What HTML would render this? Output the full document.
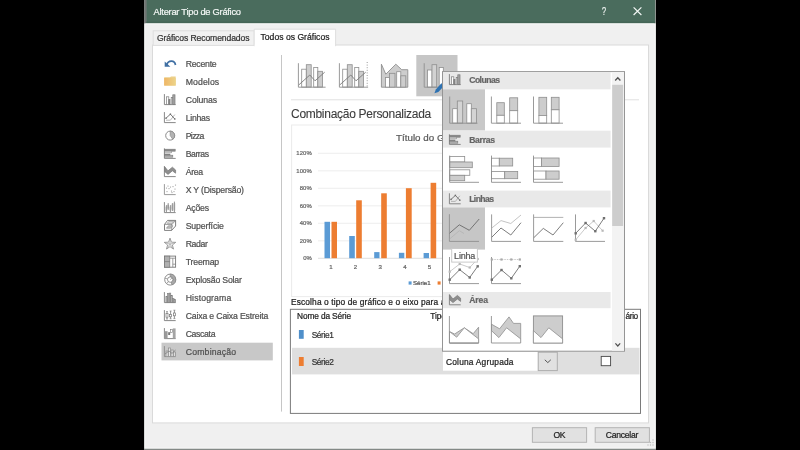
<!DOCTYPE html>
<html><head><meta charset="utf-8"><title>Alterar Tipo de Gráfico</title>
<style>
*{box-sizing:border-box;margin:0;padding:0}
html,body{width:800px;height:450px;overflow:hidden;background:#000;font-family:"Liberation Sans",sans-serif;}
#root{position:absolute;left:0;top:0;width:800px;height:450px;overflow:hidden;background:#000;filter:blur(0.42px)}
svg{position:absolute;left:0;top:0}
.t{position:absolute;white-space:pre;line-height:1.15;font-family:"Liberation Sans",sans-serif;-webkit-text-stroke:0.22px currentColor;}
.L{position:absolute;left:0;top:0;width:800px;height:450px}
</style></head><body>
<div id="root">
<div class="L" style="z-index:1"><svg width="800" height="450" viewBox="0 0 800 450">
<rect x="144.00" y="0.00" width="512.00" height="450.00" fill="#838986" />
<rect x="144.30" y="0.00" width="511.50" height="448.70" fill="#fbfbfb" />
<rect x="145.30" y="0.00" width="509.50" height="447.80" fill="#f0f0f0" />
<rect x="144.30" y="0.00" width="511.50" height="23.30" fill="#78807c" />
<rect x="146.40" y="0.00" width="508.50" height="23.30" fill="#4a6c5d" />
<rect x="144.30" y="0.00" width="2.10" height="23.30" fill="#6f7472" />
<rect x="146.40" y="21.60" width="508.50" height="1.70" fill="#446556" />
<rect x="145.30" y="23.30" width="509.50" height="1.00" fill="#f9fbfa" />
<path d="M633.6 7.3 L641.4 15.0 M641.4 7.3 L633.6 15.0" stroke="#f4f8f6" stroke-width="1.15" fill="none"/>
<rect x="152.50" y="45.00" width="496.00" height="377.90" fill="#fff" stroke="#dadada" stroke-width="1" />
<rect x="153.20" y="30.80" width="101.00" height="14.60" fill="#f1f1f1" stroke="#dedede" stroke-width="1" />
<path d="M254.2 46.2 V29.2 H335.6 V46.2" fill="#fff" stroke="#dedede" stroke-width="1"/>
<rect x="254.80" y="44.40" width="80.20" height="2.20" fill="#fff" />
<line x1="281.50" y1="55.00" x2="281.50" y2="411.60" stroke="#c6c6c6" stroke-width="1" />
<rect x="161.50" y="342.70" width="111.30" height="17.70" fill="#c8c8c8" />
<line x1="291.00" y1="99.80" x2="639.00" y2="99.80" stroke="#e0e0e0" stroke-width="1" />
<rect x="416.30" y="55.00" width="41.20" height="41.30" fill="#c6c6c6" />
<rect x="301.70" y="69.20" width="4.60" height="17.90" fill="#fff" stroke="#8e8e8e" stroke-width="0.8" /><rect x="306.30" y="64.70" width="4.90" height="22.40" fill="#cdcdcd" stroke="#8e8e8e" stroke-width="0.8" /><rect x="313.70" y="67.50" width="4.10" height="19.60" fill="#fff" stroke="#8e8e8e" stroke-width="0.8" /><rect x="317.80" y="71.30" width="4.70" height="15.80" fill="#cdcdcd" stroke="#8e8e8e" stroke-width="0.8" />
<path d="M298.40 63.20 L298.40 87.20 L325.60 87.20" fill="none" stroke="#8e8e8e" stroke-width="0.9" stroke-linejoin="round" />
<path d="M298.70 85.00 L309.80 75.00 L315.00 80.80 L324.70 72.20" fill="none" stroke="#7a7a7a" stroke-width="0.9" stroke-linejoin="round" />
<rect x="342.70" y="69.20" width="4.60" height="17.90" fill="#fff" stroke="#8e8e8e" stroke-width="0.8" /><rect x="347.30" y="64.70" width="4.90" height="22.40" fill="#cdcdcd" stroke="#8e8e8e" stroke-width="0.8" /><rect x="354.70" y="67.50" width="4.10" height="19.60" fill="#fff" stroke="#8e8e8e" stroke-width="0.8" /><rect x="358.80" y="71.30" width="4.70" height="15.80" fill="#cdcdcd" stroke="#8e8e8e" stroke-width="0.8" />
<path d="M339.40 63.20 L339.40 87.20 L368.10 87.20" fill="none" stroke="#8e8e8e" stroke-width="0.9" stroke-linejoin="round" />
<path d="M339.70 85.00 L350.80 75.00 L356.00 80.80 L365.70 72.20" fill="none" stroke="#7a7a7a" stroke-width="0.9" stroke-linejoin="round" />
<line x1="367.20" y1="62.00" x2="367.20" y2="87.00" stroke="#9a9a9a" stroke-width="1" stroke-dasharray="1 1.6"/>
<path d="M381.40 64.20 L385.80 74.20 L395.80 64.20 L401.70 69.70 L407.80 69.70 L407.80 87.20 L381.40 87.20 Z" fill="#cdcdcd" stroke="#8e8e8e" stroke-width="0.9" stroke-linejoin="round" />
<rect x="385.50" y="77.50" width="4.00" height="9.60" fill="#fff" stroke="#8e8e8e" stroke-width="0.8" /><rect x="389.50" y="73.30" width="5.50" height="13.80" fill="#cdcdcd" stroke="#8e8e8e" stroke-width="0.8" /><rect x="396.70" y="71.70" width="4.10" height="15.40" fill="#fff" stroke="#8e8e8e" stroke-width="0.8" /><rect x="400.80" y="75.80" width="5.00" height="11.30" fill="#cdcdcd" stroke="#8e8e8e" stroke-width="0.8" />
<rect x="427.50" y="70.00" width="4.50" height="17.10" fill="#fff" stroke="#8e8e8e" stroke-width="0.8" /><rect x="432.00" y="64.70" width="4.70" height="22.40" fill="#d2d2d2" stroke="#8e8e8e" stroke-width="0.8" /><rect x="439.20" y="67.50" width="4.10" height="19.60" fill="#fff" stroke="#8e8e8e" stroke-width="0.8" /><rect x="443.30" y="71.50" width="4.70" height="15.60" fill="#d2d2d2" stroke="#8e8e8e" stroke-width="0.8" />
<path d="M424.20 63.20 L424.20 87.20 L451.00 87.20" fill="none" stroke="#8e8e8e" stroke-width="0.9" stroke-linejoin="round" />
<path d="M434.4 93.2 L435.8 89.4 L441.4 83.2 L444.2 85.8 L438.4 92.0 Z" fill="#2e72b2"/>
<rect x="291.60" y="125.00" width="328.40" height="171.60" fill="#fff" stroke="#ebebeb" stroke-width="1" />
<line x1="318.00" y1="153.30" x2="612.00" y2="153.30" stroke="#e9e9e9" stroke-width="0.8" />
<line x1="318.00" y1="170.80" x2="612.00" y2="170.80" stroke="#e9e9e9" stroke-width="0.8" />
<line x1="318.00" y1="188.30" x2="612.00" y2="188.30" stroke="#e9e9e9" stroke-width="0.8" />
<line x1="318.00" y1="205.80" x2="612.00" y2="205.80" stroke="#e9e9e9" stroke-width="0.8" />
<line x1="318.00" y1="223.30" x2="612.00" y2="223.30" stroke="#e9e9e9" stroke-width="0.8" />
<line x1="318.00" y1="240.80" x2="612.00" y2="240.80" stroke="#e9e9e9" stroke-width="0.8" />
<line x1="318.00" y1="258.30" x2="612.00" y2="258.30" stroke="#d6d6d6" stroke-width="0.8" />
<rect x="324.50" y="221.80" width="5.50" height="36.40" fill="#5b9bd5" />
<rect x="331.50" y="221.80" width="5.50" height="36.40" fill="#ed7d31" />
<rect x="349.20" y="236.00" width="5.60" height="22.20" fill="#5b9bd5" />
<rect x="356.20" y="200.30" width="5.60" height="57.90" fill="#ed7d31" />
<rect x="374.20" y="252.10" width="5.30" height="6.10" fill="#5b9bd5" />
<rect x="381.20" y="193.30" width="5.60" height="64.90" fill="#ed7d31" />
<rect x="398.90" y="252.80" width="5.40" height="5.40" fill="#5b9bd5" />
<rect x="405.90" y="188.20" width="5.80" height="70.00" fill="#ed7d31" />
<rect x="423.60" y="253.00" width="5.40" height="5.20" fill="#5b9bd5" />
<rect x="430.60" y="182.80" width="5.60" height="75.40" fill="#ed7d31" />
<rect x="408.60" y="281.40" width="3.00" height="3.20" fill="#5b9bd5" />
<rect x="437.60" y="281.40" width="3.00" height="3.20" fill="#ed7d31" />
<rect x="290.40" y="309.30" width="350.10" height="104.10" fill="#fff" stroke="#7a7a7a" stroke-width="1" />
<rect x="292.00" y="347.80" width="347.50" height="26.60" fill="#dfdfdf" />
<rect x="298.90" y="330.00" width="4.80" height="8.80" fill="#4f8fca" />
<rect x="298.90" y="357.00" width="4.80" height="9.00" fill="#ed7d31" />
<rect x="443.00" y="352.00" width="95.00" height="18.70" fill="#fff" />
<rect x="538.20" y="352.20" width="19.10" height="18.40" fill="#e1e1e1" stroke="#adadad" stroke-width="1" />
<path d="M544.8 359.8 L547.8 362.6 L550.8 359.8" fill="none" stroke="#444" stroke-width="0.9"/>
<rect x="601.20" y="356.40" width="9.40" height="9.30" fill="#fff" stroke="#484848" stroke-width="0.9" />
<rect x="532.40" y="427.70" width="54.20" height="14.60" fill="#e1e1e1" stroke="#b4b4b4" stroke-width="1" />
<rect x="595.20" y="427.70" width="54.20" height="14.60" fill="#e1e1e1" stroke="#b4b4b4" stroke-width="1" />
<rect x="652.40" y="444.40" width="1.20" height="1.20" fill="#bdbdbd" />
<rect x="652.40" y="441.90" width="1.20" height="1.20" fill="#bdbdbd" />
<rect x="649.90" y="444.40" width="1.20" height="1.20" fill="#bdbdbd" />
<rect x="652.40" y="439.40" width="1.20" height="1.20" fill="#bdbdbd" />
<rect x="649.90" y="441.90" width="1.20" height="1.20" fill="#bdbdbd" />
<rect x="647.40" y="444.40" width="1.20" height="1.20" fill="#bdbdbd" />
<path d="M166.6 65.0 C168.2 60.2 174.6 59.6 175.5 65.0" fill="none" stroke="#3f6fa3" stroke-width="1.7"/><path d="M164.7 61.6 V66.8 H170.4 Z" fill="#3f6fa3"/>
<defs><linearGradient id="fg" x1="0" x2="1" y1="0" y2="0"><stop offset="0" stop-color="#efb666"/><stop offset="1" stop-color="#ecd48a"/></linearGradient></defs><path d="M164.2 77.3 H170 L171 76.4 H175.7 V85.6 H164.2 Z" fill="#ecd08a"/><path d="M164.2 78 H175.7 V85.6 H164.2 Z" fill="url(#fg)"/>
<path d="M164.40 94.10 L164.40 104.60 L175.70 104.60" fill="none" stroke="#7a7a7a" stroke-width="0.9" stroke-linejoin="round" /><rect x="166.40" y="96.80" width="2.40" height="7.80" fill="#fff" stroke="#7a7a7a" stroke-width="0.7" /><rect x="168.80" y="99.60" width="1.20" height="5.00" fill="#8c8c8c" stroke="#7a7a7a" stroke-width="0.7" /><rect x="171.20" y="97.60" width="1.60" height="7.00" fill="#fff" stroke="#7a7a7a" stroke-width="0.7" /><rect x="172.80" y="94.80" width="2.20" height="9.80" fill="#a4a4a4" stroke="#7a7a7a" stroke-width="0.7" />
<path d="M164.40 112.10 L164.40 122.60 L175.70 122.60" fill="none" stroke="#7a7a7a" stroke-width="0.9" stroke-linejoin="round" /><path d="M166.00 120.20 L170.40 120.20 L174.80 114.60" fill="none" stroke="#a6a6a6" stroke-width="0.8" stroke-linejoin="round" /><path d="M166.00 118.20 L170.40 114.20 L174.80 119.00" fill="none" stroke="#6a6a6a" stroke-width="0.9" stroke-linejoin="round" /><rect x="165.30" y="117.50" width="1.40" height="1.40" fill="#6a6a6a" /><rect x="169.70" y="113.50" width="1.40" height="1.40" fill="#6a6a6a" /><rect x="174.10" y="118.30" width="1.40" height="1.40" fill="#6a6a6a" />
<circle cx="170.2" cy="135.6" r="4.5" fill="#fff" stroke="#8a8a8a" stroke-width="1"/><path d="M170.2 135.6 V131.1 A4.5 4.5 0 0 1 172.8 139.29999999999998 Z" fill="#b4b4b4" stroke="#8a8a8a" stroke-width="0.7"/>
<path d="M164.40 148.40 L164.40 158.40 L175.70 158.40" fill="none" stroke="#7a7a7a" stroke-width="0.9" stroke-linejoin="round" /><rect x="164.40" y="149.20" width="10.80" height="2.00" fill="#8a8a8a" stroke="#7a7a7a" stroke-width="0.6" /><rect x="164.40" y="151.20" width="7.20" height="1.60" fill="#fff" stroke="#7a7a7a" stroke-width="0.6" /><rect x="164.40" y="154.00" width="5.60" height="1.20" fill="#8a8a8a" stroke="#7a7a7a" stroke-width="0.6" /><rect x="164.40" y="155.20" width="8.40" height="2.00" fill="#b0b0b0" stroke="#7a7a7a" stroke-width="0.6" />
<path d="M164.40 166.10 L164.40 176.60 L175.70 176.60" fill="none" stroke="#7a7a7a" stroke-width="0.9" stroke-linejoin="round" /><path d="M164.70 166.80 L168.00 170.80 L172.40 167.20 L175.60 170.00 L175.60 173.20 L172.40 170.80 L168.00 174.40 L164.70 171.60 Z" fill="#8e8e8e" stroke="#777" stroke-width="0.7" stroke-linejoin="round" />
<path d="M164.40 184.10 L164.40 194.60 L175.70 194.60" fill="none" stroke="#8e8e8e" stroke-width="0.9" stroke-linejoin="round" />
<rect x="166.45" y="191.05" width="1.10" height="1.10" fill="#a8a8a8" />
<rect x="168.45" y="188.05" width="1.10" height="1.10" fill="#a8a8a8" />
<rect x="170.95" y="190.55" width="1.10" height="1.10" fill="#a8a8a8" />
<rect x="172.45" y="186.05" width="1.10" height="1.10" fill="#a8a8a8" />
<rect x="174.45" y="188.55" width="1.10" height="1.10" fill="#a8a8a8" />
<rect x="167.45" y="185.55" width="1.10" height="1.10" fill="#a8a8a8" />
<rect x="171.45" y="192.05" width="1.10" height="1.10" fill="#a8a8a8" />
<rect x="174.95" y="184.55" width="1.10" height="1.10" fill="#a8a8a8" />
<rect x="165.95" y="187.55" width="1.10" height="1.10" fill="#a8a8a8" />
<rect x="169.95" y="186.55" width="1.10" height="1.10" fill="#a8a8a8" />
<rect x="173.45" y="191.05" width="1.10" height="1.10" fill="#a8a8a8" />
<path d="M164.40 202.10 L164.40 212.60 L175.70 212.60" fill="none" stroke="#7a7a7a" stroke-width="0.9" stroke-linejoin="round" />
<line x1="166.40" y1="205.10" x2="166.40" y2="212.00" stroke="#7a7a7a" stroke-width="0.8" />
<rect x="165.65" y="206.70" width="1.50" height="3.90" fill="#9a9a9a" />
<line x1="168.20" y1="203.10" x2="168.20" y2="210.10" stroke="#7a7a7a" stroke-width="0.8" />
<rect x="167.45" y="204.70" width="1.50" height="4.00" fill="#9a9a9a" />
<line x1="170.40" y1="205.10" x2="170.40" y2="212.00" stroke="#7a7a7a" stroke-width="0.8" />
<rect x="169.65" y="206.70" width="1.50" height="3.90" fill="#9a9a9a" />
<line x1="172.40" y1="203.10" x2="172.40" y2="211.00" stroke="#7a7a7a" stroke-width="0.8" />
<rect x="171.65" y="204.70" width="1.50" height="4.90" fill="#9a9a9a" />
<line x1="174.40" y1="201.60" x2="174.40" y2="212.00" stroke="#7a7a7a" stroke-width="0.8" />
<rect x="173.65" y="203.20" width="1.50" height="7.40" fill="#9a9a9a" />
<path d="M164.50 224.40 L167.60 220.40 L175.60 220.40 L175.60 226.00 L171.60 230.40 L164.50 230.40 Z" fill="#fff" stroke="#707070" stroke-width="0.9" stroke-linejoin="round" />
<path d="M164.50 224.40 L172.00 224.40 L175.60 220.40" fill="none" stroke="#707070" stroke-width="0.7" stroke-linejoin="round" />
<line x1="172.00" y1="224.40" x2="171.60" y2="230.40" stroke="#707070" stroke-width="0.7" />
<path d="M166.40 228.20 L168.40 225.80 L172.80 225.80 L170.60 228.20 Z" fill="#c4c4c4" stroke="#808080" stroke-width="0.6" stroke-linejoin="round" />
<path d="M167.20 223.40 L168.80 221.40 L173.60 221.40 L172.00 223.40 Z" fill="#e0e0e0" stroke="#909090" stroke-width="0.6" stroke-linejoin="round" />
<path d="M170.00 238.20 L171.47 242.18 L175.71 242.35 L172.38 244.97 L173.53 249.05 L170.00 246.70 L166.47 249.05 L167.62 244.97 L164.29 242.35 L168.53 242.18 Z" fill="#f4f4f4" stroke="#8a8a8a" stroke-width="0.8" stroke-linejoin="round" />
<line x1="170.00" y1="244.20" x2="170.00" y2="238.20" stroke="#9a9a9a" stroke-width="0.6" />
<line x1="170.00" y1="244.20" x2="175.71" y2="242.35" stroke="#9a9a9a" stroke-width="0.6" />
<line x1="170.00" y1="244.20" x2="173.53" y2="249.05" stroke="#9a9a9a" stroke-width="0.6" />
<line x1="170.00" y1="244.20" x2="166.47" y2="249.05" stroke="#9a9a9a" stroke-width="0.6" />
<line x1="170.00" y1="244.20" x2="164.29" y2="242.35" stroke="#9a9a9a" stroke-width="0.6" />
<rect x="164.50" y="256.10" width="11.10" height="11.10" fill="#fff" stroke="#777" stroke-width="0.9" />
<rect x="164.50" y="256.10" width="5.30" height="11.10" fill="#b0b0b0" stroke="#777" stroke-width="0.7" />
<line x1="164.50" y1="261.60" x2="169.80" y2="261.60" stroke="#777" stroke-width="0.7" />
<line x1="169.80" y1="258.20" x2="175.60" y2="258.20" stroke="#777" stroke-width="0.7" />
<line x1="172.80" y1="258.20" x2="172.80" y2="267.20" stroke="#777" stroke-width="0.7" />
<line x1="172.80" y1="264.20" x2="175.60" y2="264.20" stroke="#777" stroke-width="0.7" />
<circle cx="170.2" cy="279.6" r="5.5" fill="#fff" stroke="#808080" stroke-width="0.9"/><path d="M170.2 274.1 A5.5 5.5 0 0 1 172 284.8 L171 282.20000000000005 A2.7 2.7 0 0 0 170.2 276.90000000000003 Z" fill="#a8a8a8" stroke="#808080" stroke-width="0.6"/><circle cx="170.2" cy="279.6" r="2.7" fill="#fff" stroke="#808080" stroke-width="0.8"/><path d="M165 278.1 L167.6 279.0 M166.6 283.6 L168.4 281.6 M170.2 279.6 L172 278.20000000000005" stroke="#808080" stroke-width="0.7" fill="none"/>
<path d="M164.40 292.10 L164.40 302.60 L175.70 302.60" fill="none" stroke="#7a7a7a" stroke-width="0.9" stroke-linejoin="round" />
<rect x="165.90" y="296.60" width="1.62" height="6.00" fill="#b0b0b0" stroke="#7a7a7a" stroke-width="0.6" />
<rect x="167.52" y="293.60" width="1.62" height="9.00" fill="#b0b0b0" stroke="#7a7a7a" stroke-width="0.6" />
<rect x="169.14" y="293.10" width="1.62" height="9.50" fill="#b0b0b0" stroke="#7a7a7a" stroke-width="0.6" />
<rect x="170.76" y="295.60" width="1.62" height="7.00" fill="#b0b0b0" stroke="#7a7a7a" stroke-width="0.6" />
<rect x="172.38" y="298.60" width="1.62" height="4.00" fill="#b0b0b0" stroke="#7a7a7a" stroke-width="0.6" />
<rect x="174.00" y="299.60" width="1.62" height="3.00" fill="#b0b0b0" stroke="#7a7a7a" stroke-width="0.6" />
<path d="M164.40 310.10 L164.40 320.60 L175.70 320.60" fill="none" stroke="#7a7a7a" stroke-width="0.9" stroke-linejoin="round" />
<line x1="167.00" y1="311.60" x2="167.00" y2="319.00" stroke="#777" stroke-width="0.8" />
<rect x="166.00" y="313.40" width="2.00" height="3.80" fill="#fff" stroke="#777" stroke-width="0.7" />
<line x1="166.00" y1="311.60" x2="168.00" y2="311.60" stroke="#777" stroke-width="0.6" />
<line x1="166.00" y1="319.00" x2="168.00" y2="319.00" stroke="#777" stroke-width="0.6" />
<line x1="170.60" y1="311.00" x2="170.60" y2="318.80" stroke="#777" stroke-width="0.8" />
<rect x="169.60" y="314.40" width="2.00" height="2.40" fill="#fff" stroke="#777" stroke-width="0.7" />
<line x1="169.60" y1="311.00" x2="171.60" y2="311.00" stroke="#777" stroke-width="0.6" />
<line x1="169.60" y1="318.80" x2="171.60" y2="318.80" stroke="#777" stroke-width="0.6" />
<line x1="174.40" y1="310.20" x2="174.40" y2="318.60" stroke="#777" stroke-width="0.8" />
<rect x="173.40" y="313.00" width="2.00" height="2.80" fill="#fff" stroke="#777" stroke-width="0.7" />
<line x1="173.40" y1="310.20" x2="175.40" y2="310.20" stroke="#777" stroke-width="0.6" />
<line x1="173.40" y1="318.60" x2="175.40" y2="318.60" stroke="#777" stroke-width="0.6" />
<path d="M164.40 328.10 L164.40 338.60 L175.70 338.60" fill="none" stroke="#7a7a7a" stroke-width="0.9" stroke-linejoin="round" />
<rect x="164.90" y="331.20" width="2.70" height="7.20" fill="#9a9a9a" />
<rect x="168.20" y="332.20" width="2.00" height="2.80" fill="#777" />
<rect x="170.60" y="329.40" width="1.80" height="3.20" fill="#fff" stroke="#777" stroke-width="0.6" />
<rect x="172.80" y="328.40" width="2.80" height="10.00" fill="#a4a4a4" />
<path d="M164.40 346.10 L164.40 356.60 L175.70 356.60" fill="none" stroke="#8a8a8a" stroke-width="0.9" stroke-linejoin="round" />
<rect x="166.00" y="351.00" width="2.20" height="5.60" fill="#e0e0e0" stroke="#8a8a8a" stroke-width="0.7" />
<rect x="168.40" y="348.00" width="2.20" height="8.60" fill="#e8e8e8" stroke="#8a8a8a" stroke-width="0.7" />
<rect x="171.00" y="350.00" width="2.20" height="6.60" fill="#e0e0e0" stroke="#8a8a8a" stroke-width="0.7" />
<rect x="173.40" y="352.00" width="2.20" height="4.60" fill="#dcdcdc" stroke="#8a8a8a" stroke-width="0.7" />
<path d="M165.00 354.00 L169.00 351.00 L172.00 353.40 L175.60 350.00" fill="none" stroke="#808080" stroke-width="0.8" stroke-linejoin="round" />
</svg></div>
<div class="L" style="z-index:2">
<div class="t" style="left:153.60px;top:6.50px;font-size:9.3px;color:#f2f6f4;font-weight:normal;letter-spacing:-0.255px;">Alterar Tipo de Gráfico</div>
<div class="t" style="left:601.60px;top:5.10px;font-size:10.6px;color:#f0f4f2;font-weight:normal;letter-spacing:0.094px;transform:scaleX(0.68);transform-origin:0 0;">?</div>
<div class="t" style="left:157.00px;top:33.55px;font-size:8.6px;color:#333;font-weight:normal;letter-spacing:-0.104px;">Gráficos Recomendados</div>
<div class="t" style="left:260.50px;top:32.55px;font-size:8.6px;color:#222;font-weight:normal;letter-spacing:0.014px;">Todos os Gráficos</div>
<div class="t" style="left:185.70px;top:58.60px;font-size:8.7px;color:#505050;font-weight:normal;letter-spacing:-0.227px;">Recente</div>
<div class="t" style="left:185.70px;top:76.60px;font-size:8.7px;color:#505050;font-weight:normal;letter-spacing:0.109px;">Modelos</div>
<div class="t" style="left:185.70px;top:94.60px;font-size:8.7px;color:#505050;font-weight:normal;letter-spacing:-0.062px;">Colunas</div>
<div class="t" style="left:185.70px;top:112.60px;font-size:8.7px;color:#505050;font-weight:normal;letter-spacing:-0.262px;">Linhas</div>
<div class="t" style="left:185.70px;top:130.60px;font-size:8.7px;color:#505050;font-weight:normal;letter-spacing:-0.637px;">Pizza</div>
<div class="t" style="left:185.70px;top:148.60px;font-size:8.7px;color:#505050;font-weight:normal;letter-spacing:-0.459px;">Barras</div>
<div class="t" style="left:185.70px;top:166.60px;font-size:8.7px;color:#505050;font-weight:normal;letter-spacing:-0.353px;">Área</div>
<div class="t" style="left:185.70px;top:184.60px;font-size:8.7px;color:#505050;font-weight:normal;letter-spacing:-0.193px;">X Y (Dispersão)</div>
<div class="t" style="left:185.70px;top:202.60px;font-size:8.7px;color:#505050;font-weight:normal;letter-spacing:-0.214px;">Ações</div>
<div class="t" style="left:185.70px;top:220.60px;font-size:8.7px;color:#505050;font-weight:normal;letter-spacing:-0.114px;">Superfície</div>
<div class="t" style="left:185.70px;top:238.60px;font-size:8.7px;color:#505050;font-weight:normal;letter-spacing:-0.343px;">Radar</div>
<div class="t" style="left:185.70px;top:256.60px;font-size:8.7px;color:#505050;font-weight:normal;letter-spacing:-0.159px;">Treemap</div>
<div class="t" style="left:185.70px;top:274.60px;font-size:8.7px;color:#505050;font-weight:normal;letter-spacing:-0.172px;">Explosão Solar</div>
<div class="t" style="left:185.70px;top:292.60px;font-size:8.7px;color:#505050;font-weight:normal;letter-spacing:0.131px;">Histograma</div>
<div class="t" style="left:185.70px;top:310.60px;font-size:8.7px;color:#505050;font-weight:normal;letter-spacing:-0.160px;">Caixa e Caixa Estreita</div>
<div class="t" style="left:185.70px;top:328.60px;font-size:8.7px;color:#505050;font-weight:normal;letter-spacing:-0.346px;">Cascata</div>
<div class="t" style="left:185.70px;top:346.60px;font-size:8.7px;color:#505050;font-weight:normal;letter-spacing:0.191px;">Combinação</div>
<div class="t" style="left:291.00px;top:107.70px;font-size:12px;color:#3c3c3c;font-weight:normal;letter-spacing:-0.285px;-webkit-text-stroke:0.1px currentColor;">Combinação Personalizada</div>
<div class="t" style="left:396.00px;top:132.06px;font-size:9.8px;color:#595959;font-weight:normal;letter-spacing:0.005px;">Título do Gráfico</div>
<div class="t" style="left:296.30px;top:149.91px;font-size:5.9px;color:#666;font-weight:normal;letter-spacing:0.107px;">120%</div>
<div class="t" style="left:296.30px;top:167.66px;font-size:5.9px;color:#666;font-weight:normal;letter-spacing:0.107px;">100%</div>
<div class="t" style="left:299.80px;top:184.91px;font-size:5.9px;color:#666;font-weight:normal;letter-spacing:0.052px;">80%</div>
<div class="t" style="left:299.80px;top:202.66px;font-size:5.9px;color:#666;font-weight:normal;letter-spacing:0.052px;">60%</div>
<div class="t" style="left:299.80px;top:219.91px;font-size:5.9px;color:#666;font-weight:normal;letter-spacing:0.052px;">40%</div>
<div class="t" style="left:299.80px;top:237.66px;font-size:5.9px;color:#666;font-weight:normal;letter-spacing:0.052px;">20%</div>
<div class="t" style="left:303.30px;top:254.91px;font-size:5.9px;color:#666;font-weight:normal;letter-spacing:-0.116px;">0%</div>
<div class="t" style="left:329.20px;top:263.29px;font-size:6.1px;color:#666;font-weight:normal;letter-spacing:-0.191px;">1</div>
<div class="t" style="left:353.85px;top:263.29px;font-size:6.1px;color:#666;font-weight:normal;letter-spacing:-0.191px;">2</div>
<div class="t" style="left:378.50px;top:263.29px;font-size:6.1px;color:#666;font-weight:normal;letter-spacing:-0.191px;">3</div>
<div class="t" style="left:403.15px;top:263.29px;font-size:6.1px;color:#666;font-weight:normal;letter-spacing:-0.191px;">4</div>
<div class="t" style="left:427.80px;top:263.29px;font-size:6.1px;color:#666;font-weight:normal;letter-spacing:-0.191px;">5</div>
<div class="t" style="left:413.00px;top:279.49px;font-size:6.1px;color:#555;font-weight:normal;letter-spacing:-0.005px;">Série1</div>
<div class="t" style="left:291.00px;top:297.72px;font-size:8.4px;color:#1c1c1c;font-weight:normal;letter-spacing:0.124px;">Escolha o tipo de gráfico e o eixo para a</div>
<div class="t" style="left:297.00px;top:311.73px;font-size:8.3px;color:#222;font-weight:normal;letter-spacing:-0.112px;">Nome da Série</div>
<div class="t" style="left:430.30px;top:311.73px;font-size:8.3px;color:#222;font-weight:normal;letter-spacing:-0.115px;">Tipo</div>
<div class="t" style="left:625.60px;top:311.73px;font-size:8.3px;color:#222;font-weight:normal;letter-spacing:-0.415px;">ário</div>
<div class="t" style="left:311.70px;top:330.73px;font-size:8.3px;color:#333;font-weight:normal;letter-spacing:-0.377px;">Série1</div>
<div class="t" style="left:311.70px;top:357.73px;font-size:8.3px;color:#333;font-weight:normal;letter-spacing:-0.377px;">Série2</div>
<div class="t" style="left:446.00px;top:357.52px;font-size:8.4px;color:#222;font-weight:normal;letter-spacing:0.198px;">Coluna Agrupada</div>
<div class="t" style="left:553.60px;top:430.70px;font-size:8.6px;color:#222;font-weight:normal;letter-spacing:-0.522px;">OK</div>
<div class="t" style="left:605.70px;top:430.70px;font-size:8.6px;color:#222;font-weight:normal;letter-spacing:-0.258px;">Cancelar</div>
</div>
<div class="L" style="z-index:3"><svg width="800" height="450" viewBox="0 0 800 450">
<rect x="442.50" y="71.60" width="182.00" height="279.60" fill="#fff" stroke="#959595" stroke-width="1" />
<rect x="443.00" y="72.10" width="167.60" height="17.20" fill="#e9e9e9" />
<rect x="443.00" y="130.70" width="167.60" height="16.90" fill="#e9e9e9" />
<rect x="443.00" y="190.60" width="167.60" height="16.80" fill="#e9e9e9" />
<rect x="443.00" y="292.00" width="167.60" height="16.20" fill="#e9e9e9" />
<rect x="612.00" y="72.10" width="12.00" height="278.60" fill="#f3f3f3" />
<rect x="612.20" y="84.80" width="10.90" height="141.20" fill="#cdcdcd" />
<path d="M615.2 80.5 L617.8 77.7 L620.4 80.5" fill="none" stroke="#505050" stroke-width="1.3"/>
<path d="M615.4 343.4 L617.8 346.0 L620.2 343.4" fill="none" stroke="#505050" stroke-width="1.2"/>
<rect x="443.00" y="89.30" width="42.00" height="41.10" fill="#c8c8c8" />
<rect x="443.00" y="207.40" width="42.00" height="42.20" fill="#c6c6c6" />
<path d="M449.40 74.10 L449.40 84.60 L460.70 84.60" fill="none" stroke="#7a7a7a" stroke-width="0.9" stroke-linejoin="round" /><rect x="451.40" y="76.80" width="2.40" height="7.80" fill="#fff" stroke="#7a7a7a" stroke-width="0.7" /><rect x="453.80" y="79.60" width="1.20" height="5.00" fill="#8c8c8c" stroke="#7a7a7a" stroke-width="0.7" /><rect x="456.20" y="77.60" width="1.60" height="7.00" fill="#fff" stroke="#7a7a7a" stroke-width="0.7" /><rect x="457.80" y="74.80" width="2.20" height="9.80" fill="#a4a4a4" stroke="#7a7a7a" stroke-width="0.7" />
<path d="M449.40 134.40 L449.40 144.40 L460.70 144.40" fill="none" stroke="#7a7a7a" stroke-width="0.9" stroke-linejoin="round" /><rect x="449.40" y="135.20" width="10.80" height="2.00" fill="#8a8a8a" stroke="#7a7a7a" stroke-width="0.6" /><rect x="449.40" y="137.20" width="7.20" height="1.60" fill="#fff" stroke="#7a7a7a" stroke-width="0.6" /><rect x="449.40" y="140.00" width="5.60" height="1.20" fill="#8a8a8a" stroke="#7a7a7a" stroke-width="0.6" /><rect x="449.40" y="141.20" width="8.40" height="2.00" fill="#b0b0b0" stroke="#7a7a7a" stroke-width="0.6" />
<path d="M449.40 193.30 L449.40 203.80 L460.70 203.80" fill="none" stroke="#7a7a7a" stroke-width="0.9" stroke-linejoin="round" /><path d="M451.00 201.40 L455.40 201.40 L459.80 195.80" fill="none" stroke="#a6a6a6" stroke-width="0.8" stroke-linejoin="round" /><path d="M451.00 199.40 L455.40 195.40 L459.80 200.20" fill="none" stroke="#6a6a6a" stroke-width="0.9" stroke-linejoin="round" /><rect x="450.30" y="198.70" width="1.40" height="1.40" fill="#6a6a6a" /><rect x="454.70" y="194.70" width="1.40" height="1.40" fill="#6a6a6a" /><rect x="459.10" y="199.50" width="1.40" height="1.40" fill="#6a6a6a" />
<path d="M449.40 294.30 L449.40 304.80 L460.70 304.80" fill="none" stroke="#7a7a7a" stroke-width="0.9" stroke-linejoin="round" /><path d="M449.70 295.00 L453.00 299.00 L457.40 295.40 L460.60 298.20 L460.60 301.40 L457.40 299.00 L453.00 302.60 L449.70 299.80 Z" fill="#8e8e8e" stroke="#777" stroke-width="0.7" stroke-linejoin="round" />
<rect x="452.70" y="108.70" width="4.60" height="14.40" fill="#fff" stroke="#8e8e8e" stroke-width="0.8" /><rect x="457.30" y="101.00" width="5.40" height="22.10" fill="#d4d4d4" stroke="#8e8e8e" stroke-width="0.8" /><rect x="466.80" y="103.70" width="4.50" height="19.40" fill="#fff" stroke="#8e8e8e" stroke-width="0.8" /><rect x="471.30" y="108.70" width="5.20" height="14.40" fill="#d4d4d4" stroke="#8e8e8e" stroke-width="0.8" />
<path d="M449.70 96.50 L449.70 123.20 L477.50 123.20" fill="none" stroke="#8e8e8e" stroke-width="0.9" stroke-linejoin="round" />
<rect x="496.80" y="102.70" width="7.50" height="12.60" fill="#cdcdcd" stroke="#8e8e8e" stroke-width="0.8" />
<rect x="496.80" y="115.30" width="7.50" height="7.80" fill="#fff" stroke="#8e8e8e" stroke-width="0.8" />
<rect x="509.70" y="97.80" width="8.00" height="12.90" fill="#cdcdcd" stroke="#8e8e8e" stroke-width="0.8" />
<rect x="509.70" y="110.70" width="8.00" height="12.40" fill="#fff" stroke="#8e8e8e" stroke-width="0.8" />
<path d="M491.40 96.50 L491.40 123.20 L521.00 123.20" fill="none" stroke="#8e8e8e" stroke-width="0.9" stroke-linejoin="round" />
<rect x="538.90" y="97.30" width="7.80" height="18.10" fill="#cdcdcd" stroke="#8e8e8e" stroke-width="0.8" />
<rect x="538.90" y="115.40" width="7.80" height="7.70" fill="#fff" stroke="#8e8e8e" stroke-width="0.8" />
<rect x="551.30" y="97.30" width="7.80" height="12.50" fill="#cdcdcd" stroke="#8e8e8e" stroke-width="0.8" />
<rect x="551.30" y="109.80" width="7.80" height="13.30" fill="#fff" stroke="#8e8e8e" stroke-width="0.8" />
<path d="M533.50 96.50 L533.50 123.20 L563.00 123.20" fill="none" stroke="#8e8e8e" stroke-width="0.9" stroke-linejoin="round" />
<rect x="449.70" y="156.50" width="15.00" height="5.50" fill="#fff" stroke="#8e8e8e" stroke-width="0.8" />
<rect x="449.70" y="162.00" width="22.60" height="5.70" fill="#cdcdcd" stroke="#8e8e8e" stroke-width="0.8" />
<rect x="449.70" y="169.80" width="20.10" height="5.50" fill="#fff" stroke="#8e8e8e" stroke-width="0.8" />
<rect x="449.70" y="175.30" width="15.00" height="5.40" fill="#cdcdcd" stroke="#8e8e8e" stroke-width="0.8" />
<path d="M449.70 155.60 L449.70 182.30 L479.00 182.30" fill="none" stroke="#8e8e8e" stroke-width="0.9" stroke-linejoin="round" />
<rect x="491.50" y="158.20" width="7.80" height="7.80" fill="#fff" stroke="#8e8e8e" stroke-width="0.8" />
<rect x="499.30" y="158.20" width="13.40" height="7.80" fill="#cdcdcd" stroke="#8e8e8e" stroke-width="0.8" />
<rect x="491.50" y="171.50" width="13.20" height="7.20" fill="#fff" stroke="#8e8e8e" stroke-width="0.8" />
<rect x="504.70" y="171.50" width="13.00" height="7.20" fill="#cdcdcd" stroke="#8e8e8e" stroke-width="0.8" />
<path d="M491.50 155.60 L491.50 182.30 L521.00 182.30" fill="none" stroke="#8e8e8e" stroke-width="0.9" stroke-linejoin="round" />
<rect x="533.50" y="158.00" width="7.90" height="8.40" fill="#fff" stroke="#8e8e8e" stroke-width="0.8" />
<rect x="541.40" y="158.00" width="17.70" height="8.40" fill="#cdcdcd" stroke="#8e8e8e" stroke-width="0.8" />
<rect x="533.50" y="171.00" width="12.50" height="8.20" fill="#fff" stroke="#8e8e8e" stroke-width="0.8" />
<rect x="546.00" y="171.00" width="13.10" height="8.20" fill="#cdcdcd" stroke="#8e8e8e" stroke-width="0.8" />
<path d="M533.50 155.60 L533.50 182.30 L563.00 182.30" fill="none" stroke="#8e8e8e" stroke-width="0.9" stroke-linejoin="round" />
<path d="M449.40 214.20 L449.40 241.40 L479.00 241.40" fill="none" stroke="#8e8e8e" stroke-width="0.9" stroke-linejoin="round" />
<path d="M449.60 239.00 L459.30 230.70 L464.00 233.50" fill="none" stroke="#b4b4b4" stroke-width="0.8" stroke-linejoin="round" />
<path d="M449.60 233.20 L459.30 224.80 L469.30 230.30 L479.20 219.00" fill="none" stroke="#6a6a6a" stroke-width="0.9" stroke-linejoin="round" />
<path d="M491.60 214.40 L491.60 241.40 L521.00 241.40" fill="none" stroke="#8e8e8e" stroke-width="0.9" stroke-linejoin="round" />
<path d="M491.80 228.00 L501.00 220.60 L510.80 223.50 L521.00 215.00" fill="none" stroke="#bdbdbd" stroke-width="0.9" stroke-linejoin="round" />
<path d="M491.80 237.20 L501.00 228.00 L510.80 235.00 L521.00 222.70" fill="none" stroke="#6e6e6e" stroke-width="0.9" stroke-linejoin="round" />
<path d="M533.60 214.40 L533.60 241.40 L563.30 241.40" fill="none" stroke="#8e8e8e" stroke-width="0.9" stroke-linejoin="round" />
<line x1="533.60" y1="217.40" x2="563.30" y2="217.40" stroke="#a8a8a8" stroke-width="0.9" />
<path d="M533.80 237.70 L543.30 228.40 L553.00 235.00 L563.30 222.70" fill="none" stroke="#6e6e6e" stroke-width="0.9" stroke-linejoin="round" />
<path d="M575.50 214.40 L575.50 241.40 L605.00 241.40" fill="none" stroke="#8e8e8e" stroke-width="0.9" stroke-linejoin="round" />
<path d="M575.70 239.80 L585.60 228.00 L593.70 221.00 L602.60 230.70" fill="none" stroke="#bdbdbd" stroke-width="0.8" stroke-linejoin="round" />
<rect x="574.60" y="238.70" width="2.20" height="2.20" fill="#b8b8b8" /><rect x="584.50" y="226.90" width="2.20" height="2.20" fill="#b8b8b8" /><rect x="592.60" y="219.90" width="2.20" height="2.20" fill="#b8b8b8" /><rect x="601.50" y="229.60" width="2.20" height="2.20" fill="#b8b8b8" />
<path d="M575.70 233.30 L585.60 223.00 L595.30 231.20 L604.00 218.20" fill="none" stroke="#6e6e6e" stroke-width="0.9" stroke-linejoin="round" />
<rect x="574.50" y="232.10" width="2.40" height="2.40" fill="#707070" /><rect x="584.40" y="221.80" width="2.40" height="2.40" fill="#707070" /><rect x="594.10" y="230.00" width="2.40" height="2.40" fill="#707070" /><rect x="602.80" y="217.00" width="2.40" height="2.40" fill="#707070" />
<path d="M449.50 257.00 L449.50 283.60 L479.00 283.60" fill="none" stroke="#8e8e8e" stroke-width="0.9" stroke-linejoin="round" />
<path d="M449.70 271.70 L459.70 264.00 L469.70 267.50 L477.70 259.00" fill="none" stroke="#bdbdbd" stroke-width="0.8" stroke-linejoin="round" />
<rect x="448.60" y="270.60" width="2.20" height="2.20" fill="#b8b8b8" /><rect x="458.60" y="262.90" width="2.20" height="2.20" fill="#b8b8b8" /><rect x="468.60" y="266.40" width="2.20" height="2.20" fill="#b8b8b8" /><rect x="476.60" y="257.90" width="2.20" height="2.20" fill="#b8b8b8" />
<path d="M449.70 279.70 L459.70 269.70 L469.70 277.50 L477.70 266.30" fill="none" stroke="#6e6e6e" stroke-width="0.9" stroke-linejoin="round" />
<rect x="448.50" y="278.50" width="2.40" height="2.40" fill="#707070" /><rect x="458.50" y="268.50" width="2.40" height="2.40" fill="#707070" /><rect x="468.50" y="276.30" width="2.40" height="2.40" fill="#707070" /><rect x="476.50" y="265.10" width="2.40" height="2.40" fill="#707070" />
<path d="M491.50 257.00 L491.50 283.60 L521.00 283.60" fill="none" stroke="#8e8e8e" stroke-width="0.9" stroke-linejoin="round" />
<path d="M491.80 259.50 L501.50 259.50 L511.30 259.50 L519.80 259.50" fill="none" stroke="#bdbdbd" stroke-width="0.8" stroke-linejoin="round" stroke-dasharray="1.5 1"/>
<rect x="490.70" y="258.40" width="2.20" height="2.20" fill="#aaa" /><rect x="500.40" y="258.40" width="2.20" height="2.20" fill="#aaa" /><rect x="510.20" y="258.40" width="2.20" height="2.20" fill="#aaa" /><rect x="518.70" y="258.40" width="2.20" height="2.20" fill="#aaa" />
<path d="M491.80 279.70 L501.50 270.00 L511.30 278.30 L519.80 266.20" fill="none" stroke="#6e6e6e" stroke-width="0.9" stroke-linejoin="round" />
<rect x="490.60" y="278.50" width="2.40" height="2.40" fill="#707070" /><rect x="500.30" y="268.80" width="2.40" height="2.40" fill="#707070" /><rect x="510.10" y="277.10" width="2.40" height="2.40" fill="#707070" /><rect x="518.60" y="265.00" width="2.40" height="2.40" fill="#707070" />
<path d="M449.50 331.60 L454.60 334.00 L464.30 327.80 L473.20 333.70 L478.60 327.20 L478.60 343.00 L449.50 343.00 Z" fill="#cdcdcd" stroke="#8e8e8e" stroke-width="0.8" stroke-linejoin="round" />
<path d="M449.50 331.60 L456.70 337.20 L464.30 327.80 L478.60 338.90 L478.60 343.00 L449.50 343.00 Z" fill="#fff" stroke="#8e8e8e" stroke-width="0.8" stroke-linejoin="round" />
<path d="M449.40 316.00 L449.40 343.00 L478.60 343.00" fill="none" stroke="#8e8e8e" stroke-width="0.9" stroke-linejoin="round" />
<path d="M491.50 324.20 L499.60 328.80 L509.00 316.90 L513.50 323.40 L520.70 323.40 L520.70 338.90 L506.60 327.80 L498.90 337.60 L491.50 330.70 Z" fill="#cdcdcd" stroke="#8e8e8e" stroke-width="0.8" stroke-linejoin="round" />
<path d="M491.40 316.00 L491.40 343.00 L520.70 343.00 L520.70 338.90" fill="none" stroke="#8e8e8e" stroke-width="0.9" stroke-linejoin="round" />
<rect x="533.40" y="315.90" width="29.20" height="27.10" fill="#cdcdcd" stroke="#8e8e8e" stroke-width="0.9" />
<path d="M533.40 330.70 L541.00 337.60 L548.80 327.80 L562.60 338.90 L562.60 343.00 L533.40 343.00 Z" fill="#fff" stroke="#8e8e8e" stroke-width="0.8" stroke-linejoin="round" />
<rect x="451.70" y="248.50" width="25.70" height="13.60" fill="#fff" stroke="#cacaca" stroke-width="1" />
</svg></div>
<div class="L" style="z-index:4">
<div class="t" style="left:469.20px;top:75.61px;font-size:8.6px;color:#666;font-weight:bold;letter-spacing:-0.518px;">Colunas</div>
<div class="t" style="left:469.20px;top:135.66px;font-size:8.6px;color:#666;font-weight:bold;letter-spacing:-0.287px;">Barras</div>
<div class="t" style="left:469.20px;top:194.61px;font-size:8.6px;color:#666;font-weight:bold;letter-spacing:-0.581px;">Linhas</div>
<div class="t" style="left:469.20px;top:295.56px;font-size:8.6px;color:#666;font-weight:bold;letter-spacing:-0.103px;">Área</div>
<div class="t" style="left:454.10px;top:250.57px;font-size:9.0px;color:#555;font-weight:normal;letter-spacing:-0.208px;">Linha</div>
</div>
</div>
</body></html>
